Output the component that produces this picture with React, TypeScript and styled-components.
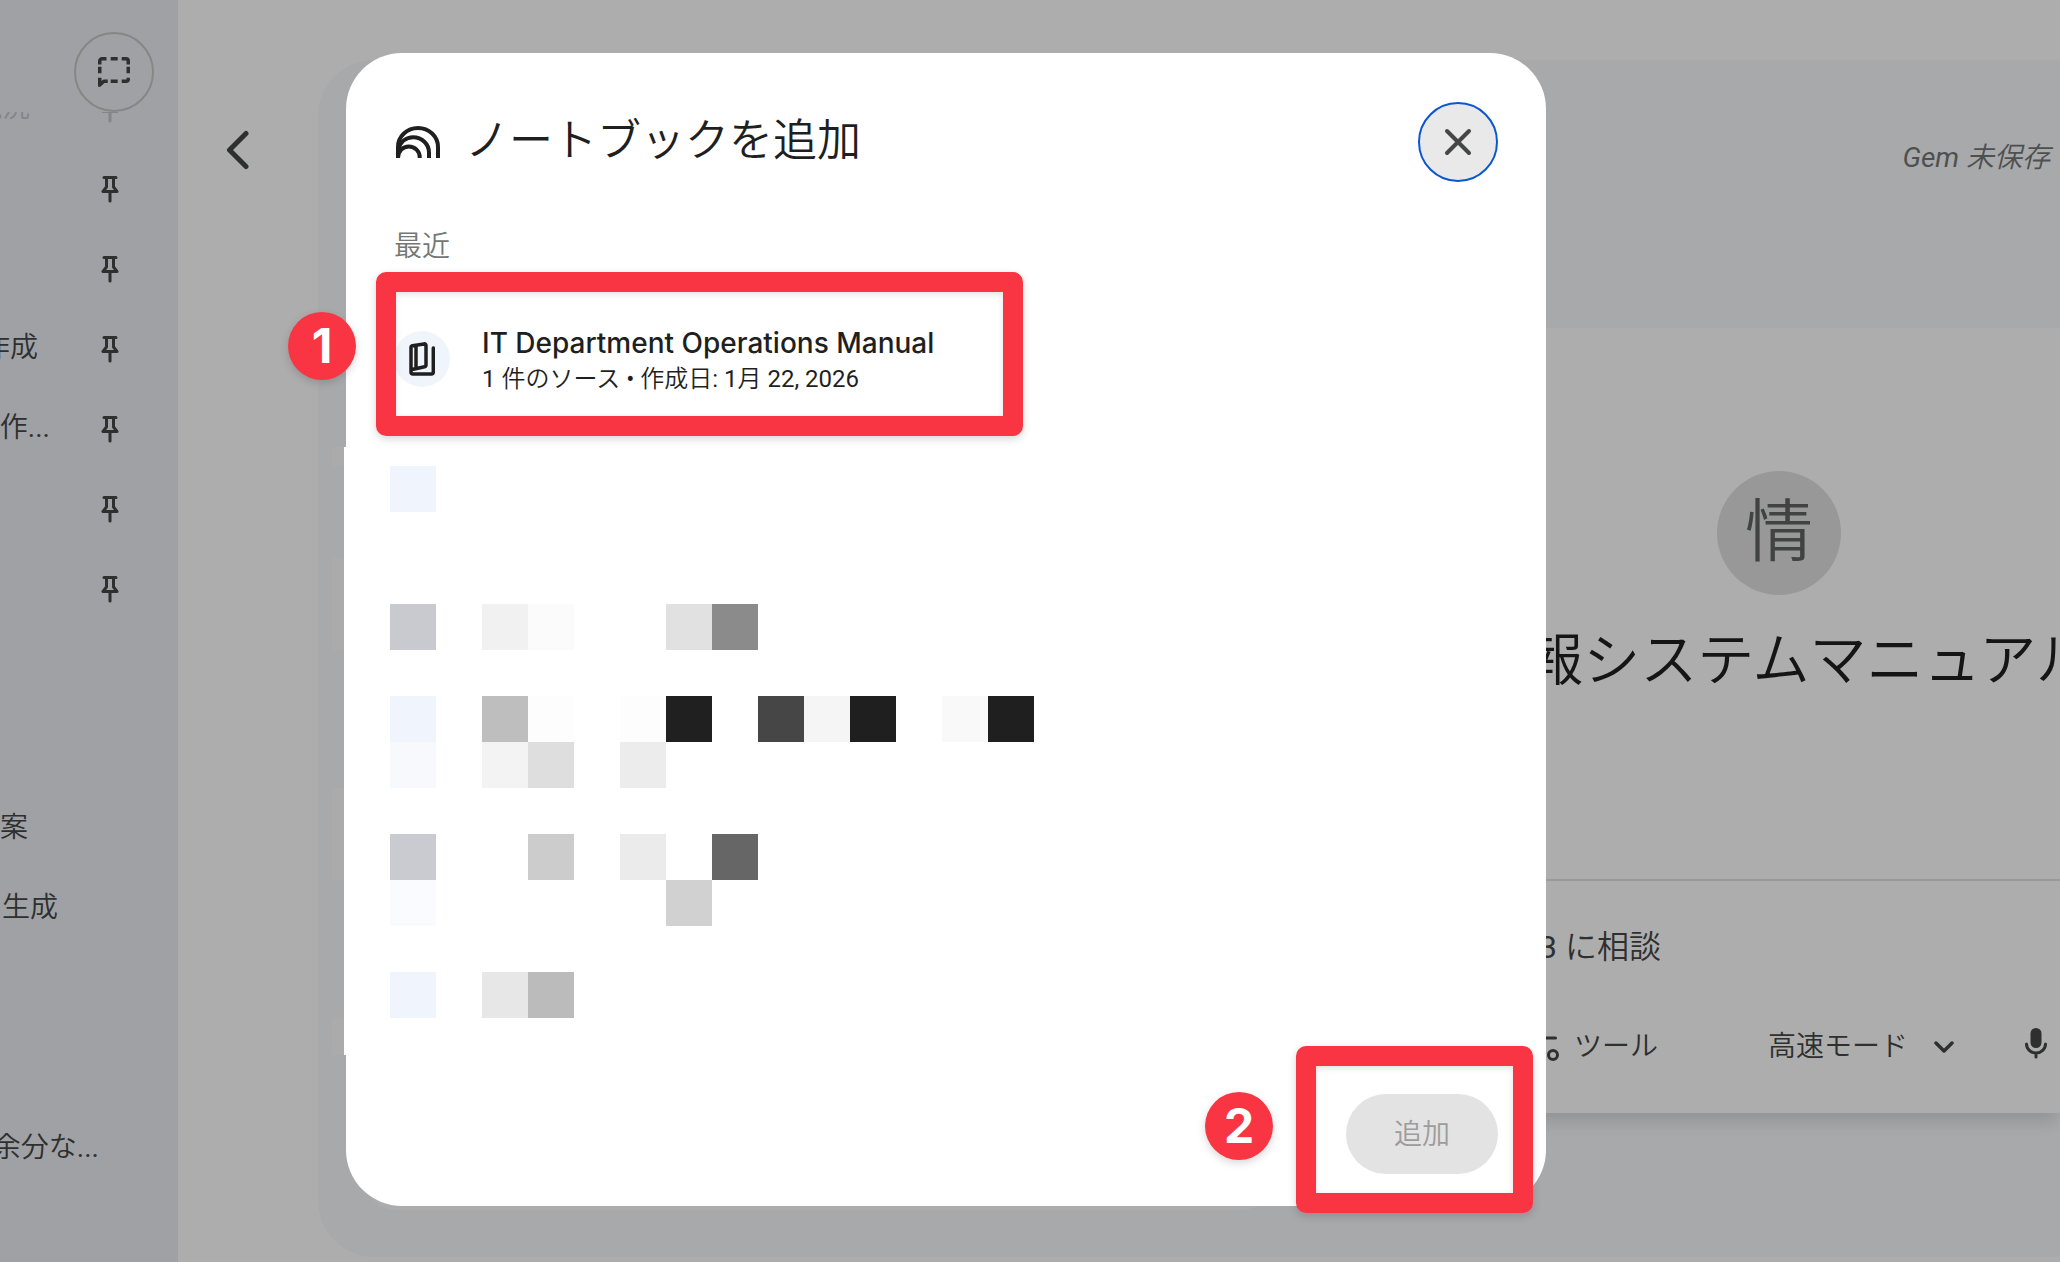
import React from "react";
import styled, { createGlobalStyle } from "styled-components";

const fontStack = `Roboto, "Noto Sans CJK JP DemiLight", "Noto Sans CJK JP", sans-serif`;

const colors = {
  sidebar: "#ebedf4",
  surface: "#ffffff",
  card: "#f8fafd",
  text: "#1f1f1f",
  icon: "#444746",
  outline: "#c4c7c5",
  callout: "#f93543",
};

const GlobalStyle = createGlobalStyle`
  *, *::before, *::after { box-sizing: border-box; }
  body { margin: 0; background: #adadad; }
  button { font: inherit; color: inherit; border: 0; padding: 0; background: none; cursor: pointer; }
  h1, h2, h3, p, ul { margin: 0; padding: 0; font-weight: inherit; }
  ul { list-style: none; }
  svg { display: block; flex: none; }
`;

const Page = styled.div`
  position: relative;
  display: flex;
  height: 100vh;
  overflow: hidden;
  background: ${colors.surface};
  color: ${colors.text};
  font-family: ${fontStack};
  font-size: 28px;
  font-weight: 400;
  line-height: 36px;
`;

/* Sidebar */

const Sidebar = styled.nav`
  flex: none;
  display: flex;
  flex-direction: column;
  width: 178px;
  background: ${colors.sidebar};
  color: ${colors.icon};
`;

const SidebarTop = styled.div`
  display: flex;
  justify-content: flex-end;
  padding: 32px 24px 0;
`;

const TempChatButton = styled.button`
  display: grid;
  place-items: center;
  width: 80px;
  height: 80px;
  border: 2px solid ${colors.outline};
  border-radius: 50%;
`;

const ChatScroll = styled.div`
  position: relative;
  flex: 1;
  display: flex;
  flex-direction: column;
  justify-content: flex-start;
  overflow: hidden;

  &::before {
    content: "";
    position: absolute;
    z-index: 1;
    inset: 0 0 auto;
    height: 24px;
    background: ${colors.sidebar};
    opacity: 0.75;
  }
`;

const ChatList = styled.ul`
  margin-top: -43px;
`;

const ChatRow = styled.li`
  display: flex;
  justify-content: space-between;
  align-items: center;
  height: 80px;
  padding-right: 59px;
`;

const ChatName = styled.span<{ $visible: number }>`
  display: flex;
  justify-content: flex-end;
  width: ${(p) => p.$visible}px;
  padding-bottom: 2px;
  overflow: hidden;
  white-space: nowrap;
`;

/* Gem editor */

const Main = styled.main`
  flex: 1;
  min-width: 0;
  display: flex;
  padding: 60px 0 5px;
`;

const BackColumn = styled.div`
  flex: none;
  width: 140px;
  padding: 60px 30px 0;
`;

const BackButton = styled.button`
  display: grid;
  place-items: center;
  width: 60px;
  height: 60px;
`;

const EditorCard = styled.section`
  flex: 1;
  min-width: 0;
  display: flex;
  flex-direction: column;
  border-radius: 56px 0 0 56px;
  background: ${colors.card};
`;

const EditorHeader = styled.header`
  flex: none;
  display: flex;
  justify-content: flex-end;
  height: 268px;
  padding: 80px 10px 0;
  color: #747775;
  font-style: italic;
`;

const EditorBody = styled.div`
  flex: 1;
  display: grid;
  grid-template-columns: minmax(0, 1fr) 562px;
  gap: 224px;
  padding-left: 47px;
`;

const FormPane = styled.div`
  margin-bottom: 47px;
  border-radius: 32px;
  background: ${colors.surface};
`;

const PreviewPane = styled.div`
  display: flex;
  flex-direction: column;
  margin-bottom: 144px;
  background: ${colors.surface};
`;

const PreviewHero = styled.div`
  flex: 1;
  display: flex;
  flex-direction: column;
  align-items: center;
  padding-top: 143px;
`;

const GemAvatar = styled.div`
  display: grid;
  place-items: center;
  width: 124px;
  height: 124px;
  border-radius: 50%;
  background: #e1e1e1;
  color: #5f6361;
  font-size: 68px;
  line-height: 80px;
`;

const GemTitle = styled.h2`
  padding: 26px 0 0 4px;
  font-size: 57px;
  line-height: 80px;
  white-space: nowrap;
`;

const Composer = styled.div`
  flex: none;
  display: flex;
  flex-direction: column;
  justify-content: space-between;
  height: 234px;
  border-top: 2px solid #e1e3e1;
  padding: 46px 12px 46px 32px;
  box-shadow: 0 12px 16px -2px rgba(0, 0, 0, 0.12);
  clip-path: inset(0 0 -48px 0);
`;

const Prompt = styled.p`
  display: flex;
  justify-content: flex-end;
  width: 131px;
  color: ${colors.icon};
  font-size: 32px;
  line-height: 40px;
  white-space: nowrap;
`;

const ComposerBar = styled.div`
  display: flex;
  justify-content: space-between;
  align-items: center;
  color: ${colors.icon};
`;

const ToolButton = styled.button<{ $gap: number }>`
  display: flex;
  align-items: center;
  gap: ${(p) => p.$gap}px;
`;

const ModeGroup = styled.div`
  display: flex;
  align-items: center;
  gap: 70px;
`;

const MicButton = styled.button`
  height: 40px;
  padding-bottom: 8px;
`;

/* Dialog */

const Scrim = styled.div`
  position: absolute;
  z-index: 2;
  inset: 0;
  display: flex;
  justify-content: center;
  align-items: center;
  padding: 0 168px 4px 0;
  background: rgba(0, 0, 0, 0.32);
`;

const Dialog = styled.section`
  width: 1200px;
  max-width: 100%;
  border-radius: 56px;
  padding: 49px 0 32px;
  background: ${colors.surface};
`;

const DialogHeader = styled.header`
  display: flex;
  align-items: center;
  gap: 25px;
  padding: 0 48px 0 50px;
`;

const DialogTitle = styled.h1`
  flex: 1;
  padding-bottom: 2px;
  font-size: 44px;
  line-height: 56px;
`;

const CloseButton = styled.button`
  display: grid;
  place-items: center;
  width: 80px;
  height: 80px;
  border: 2px solid #0b57d0;
  border-radius: 50%;
  background: #e9e9e9;
  color: ${colors.icon};
`;

const SectionLabel = styled.h3`
  padding: 47px 48px 27px;
  font-size: 28px;
  line-height: 36px;
  color: #747775;
`;

const Anchor = styled.div`
  position: relative;
`;

const NotebookRow = styled.button`
  display: flex;
  align-items: center;
  gap: 32px;
  width: 100%;
  height: 124px;
  padding: 10px 48px 0;
  text-align: left;
`;

const NotebookBadge = styled.span`
  display: grid;
  place-items: center;
  width: 56px;
  height: 56px;
  border-radius: 50%;
  background: #f0f4fb;
`;

const NotebookText = styled.span`
  display: flex;
  flex-direction: column;
`;

const NotebookName = styled.span`
  font-family: Inter, "Noto Sans CJK JP", sans-serif;
  font-weight: 500;
  font-size: 28px;
  line-height: 40px;
`;

const NotebookMeta = styled.span`
  font-size: 24px;
  line-height: 32px;
`;

const Redacted = styled.div`
  display: flex;
  margin: 31px 0 39px -14px;
`;

const RedactedEdge = styled.div`
  flex: none;
  width: 12px;
  background: linear-gradient(
    #ababab 0 19px, transparent 19px 111px,
    #ababab 111px 203px, transparent 203px 341px,
    #ababab 341px 433px, transparent 433px 571px,
    #ababab 571px
  );
`;

const Mosaic = styled.div`
  flex: 1;
  display: grid;
  grid-template-columns: repeat(14, 46px);
  grid-auto-rows: 46px;
  padding: 19px 0 37px 46px;
  background: ${colors.surface};
`;

const Tile = styled.i<{ $tone: string }>`
  background: ${(p) => p.$tone};
`;

const DialogFooter = styled.footer`
  display: flex;
  justify-content: flex-end;
  padding: 0 48px;
`;

const AddButton = styled.button`
  display: block;
  width: 152px;
  height: 80px;
  padding-top: 2px;
  border-radius: 40px;
  background: #e3e3e3;
  color: #9c9c9c;
  font-size: 28px;
  line-height: 36px;
`;

/* Callouts */

const Frame = styled.div<{ $inset: string }>`
  position: absolute;
  inset: ${(p) => p.$inset};
  border: 20px solid ${colors.callout};
  border-radius: 10px;
  box-shadow: 0 3px 8px rgba(0, 0, 0, 0.16), inset 0 2px 6px rgba(0, 0, 0, 0.12);
  pointer-events: none;
`;

const StepBadge = styled.div<{ $left: number; $top: number }>`
  position: absolute;
  left: ${(p) => p.$left}px;
  top: ${(p) => p.$top}px;
  display: grid;
  place-items: center;
  width: 68px;
  height: 68px;
  border-radius: 50%;
  background: ${colors.callout};
  box-shadow: 0 3px 8px rgba(0, 0, 0, 0.16);
  color: #fff;
  font-family: Inter, "Liberation Sans", sans-serif;
  font-weight: 700;
  font-size: 48px;
  line-height: 64px;
`;

/* Icons */

const PinIcon = () => (
  <svg width="18" height="28" viewBox="0 0 18 28" fill="none" stroke="currentColor" strokeWidth="3" strokeLinecap="round" strokeLinejoin="round">
    <path d="M3 2.500h12M5.500 2.500v9.500L2 16.500h14L12.500 12V2.500M9 17v9" />
  </svg>
);

const TempChatIcon = () => (
  <svg width="32" height="30" viewBox="0 0 32 30" fill="none" stroke="currentColor" strokeWidth="3.500">
    <path d="M1.750 7.500V4a2.250 2.250 0 0 1 2.250-2.250h4.500M12.700 1.750h7M23.700 1.750H28A2.250 2.250 0 0 1 30.250 4v3.500M1.750 9.800v6.500M30.250 9.800v6.500M30.250 20.700V22a2.250 2.250 0 0 1-2.250 2.250h-4.300M12.700 24.250h7M1.750 20.700v7.300l4-3.750h4" strokeLinejoin="round" />
    <path d="M0 24v4.800c0 1 1.200 1.500 2 .8l4.500-4.500z" fill="currentColor" stroke="none" />
  </svg>
);

const BackIcon = () => (
  <svg width="24" height="40" viewBox="0 0 24 40" fill="none" stroke={colors.icon} strokeWidth="5" strokeLinecap="round" strokeLinejoin="round">
    <path d="M20 3.500 3.500 20 20 36.500" />
  </svg>
);

const LogoIcon = () => (
  <svg width="44" height="32" viewBox="0 0 44 32" fill="none" stroke="currentColor" strokeWidth="4">
    <path d="M2 32V21A20 19 0 0 1 42 21V32" />
    <path d="M2 23.500C4.500 15.500 10.500 11.300 17 11.300C26 11.300 33 18 33 26.500V32" />
    <path d="M2 32C2 25 7 20.500 12.800 20.500C19 20.500 23.700 25.300 23.700 31V32" />
  </svg>
);

const CloseIcon = () => (
  <svg width="28" height="28" viewBox="0 0 28 28" fill="none" stroke="currentColor" strokeWidth="4" strokeLinecap="round">
    <path d="M3 3l22 22M25 3 3 25" />
  </svg>
);

const NotebookIcon = () => (
  <svg width="26" height="34" viewBox="0 0 26 34" fill="none" stroke="currentColor" strokeWidth="3.500" strokeLinecap="round" strokeLinejoin="round">
    <path d="M2 30.500V5.500C2 4.500 2.600 4 3.400 3.800L15 1.900C16.200 1.700 17 2.300 17 3.400V23C17 24 16.500 24.500 15.600 24.700L2 27.800M7 4V26M2 28V30C2 31.300 2.700 32 4 32H22.300C23.600 32 24.300 31.300 24.300 30V6" />
  </svg>
);

const ToolsIcon = () => (
  <svg width="30" height="28" viewBox="0 0 30 28" fill="none" stroke="currentColor" strokeWidth="3" strokeLinecap="round">
    <circle cx="6" cy="5" r="4.500" />
    <path d="M14 5h11.500M3 22h10" />
    <circle cx="23" cy="22" r="4.500" />
  </svg>
);

const ChevronDownIcon = () => (
  <svg width="20" height="12" viewBox="0 0 20 12" fill="none" stroke="currentColor" strokeWidth="3.500" strokeLinecap="round" strokeLinejoin="round">
    <path d="M2 2l8 8 8-8" />
  </svg>
);

const MicIcon = () => (
  <svg width="24" height="32" viewBox="0 0 24 32" fill="none" stroke="currentColor" strokeLinecap="round">
    <rect x="6.500" y="1" width="11" height="20" rx="5.500" fill="currentColor" stroke="none" />
    <path d="M2.500 17a9.500 9 0 0 0 19 0M12 26v4" strokeWidth="3" />
  </svg>
);

/* Data */

type Chat = { name?: string; visible?: number; pinned?: boolean };

const chats: Chat[] = [
  { name: "現況", visible: 30, pinned: true },
  { pinned: true },
  { pinned: true },
  { name: "作成", visible: 38, pinned: true },
  { name: "作...", visible: 50, pinned: true },
  { pinned: true },
  { pinned: true },
  {},
  {},
  { name: "案", visible: 28 },
  { name: "生成", visible: 58 },
  {},
  {},
  { name: "余分な...", visible: 99 },
];

const mosaicRows: Record<number, Record<number, string>> = {
  0: { 0: "#f0f4fc" },
  3: { 0: "#c9cad0", 2: "#f1f1f1", 3: "#fbfbfb", 6: "#e1e1e1", 7: "#8b8b8b" },
  5: {
    0: "#f0f4fc", 2: "#bebebe", 3: "#fdfdfd", 5: "#fdfdfd", 6: "#202020",
    8: "#464646", 9: "#f5f5f5", 10: "#1f1f1f", 12: "#f9f9f9", 13: "#1f1f1f",
  },
  6: { 0: "#f7f9fd", 2: "#f3f3f3", 3: "#dedede", 5: "#ececec" },
  8: { 0: "#cacbd0", 3: "#cccccc", 5: "#ebebeb", 7: "#666666" },
  9: { 0: "#fafbfe", 6: "#d1d1d1" },
  11: { 0: "#f0f4fc", 2: "#e7e7e7", 3: "#bbbbbb" },
};

const tiles = Array.from({ length: 12 * 14 }, (_, i) => {
  const row = mosaicRows[Math.floor(i / 14)];
  return (row && row[i % 14]) || "transparent";
});

export default function App() {
  return (
    <>
      <GlobalStyle />
      <Page>
        <Sidebar>
          <SidebarTop>
            <TempChatButton aria-label="一時チャット">
              <TempChatIcon />
            </TempChatButton>
          </SidebarTop>
          <ChatScroll>
            <ChatList>
              {chats.map((chat, i) => (
                <ChatRow key={i}>
                  <ChatName $visible={chat.visible ?? 0}>{chat.name}</ChatName>
                  {chat.pinned && <PinIcon />}
                </ChatRow>
              ))}
            </ChatList>
          </ChatScroll>
        </Sidebar>

        <Main>
          <BackColumn>
            <BackButton aria-label="戻る">
              <BackIcon />
            </BackButton>
          </BackColumn>
          <EditorCard>
            <EditorHeader>Gem 未保存</EditorHeader>
            <EditorBody>
              <FormPane />
              <PreviewPane>
                <PreviewHero>
                  <GemAvatar>情</GemAvatar>
                  <GemTitle>情報システムマニュアル</GemTitle>
                </PreviewHero>
                <Composer>
                  <Prompt>3 に相談</Prompt>
                  <ComposerBar>
                    <ToolButton $gap={14}>
                      <ToolsIcon />
                      ツール
                    </ToolButton>
                    <ModeGroup>
                      <ToolButton $gap={26}>
                        高速モード
                        <ChevronDownIcon />
                      </ToolButton>
                      <MicButton aria-label="マイク">
                        <MicIcon />
                      </MicButton>
                    </ModeGroup>
                  </ComposerBar>
                </Composer>
              </PreviewPane>
            </EditorBody>
          </EditorCard>
        </Main>

        <Scrim>
          <Dialog role="dialog" aria-labelledby="dialog-title">
            <DialogHeader>
              <LogoIcon />
              <DialogTitle id="dialog-title">ノートブックを追加</DialogTitle>
              <CloseButton aria-label="閉じる">
                <CloseIcon />
              </CloseButton>
            </DialogHeader>

            <SectionLabel>最近</SectionLabel>
            <Anchor>
              <NotebookRow>
                <NotebookBadge>
                  <NotebookIcon />
                </NotebookBadge>
                <NotebookText>
                  <NotebookName>IT Department Operations Manual</NotebookName>
                  <NotebookMeta>1 件のソース • 作成日: 1月 22, 2026</NotebookMeta>
                </NotebookText>
              </NotebookRow>
              <Frame $inset="-20px 523px -20px 30px" />
              <StepBadge $left={-58} $top={20}>1</StepBadge>
            </Anchor>

            <Redacted aria-hidden="true">
              <RedactedEdge />
              <Mosaic>
                {tiles.map((tone, i) => (
                  <Tile key={i} $tone={tone} />
                ))}
              </Mosaic>
            </Redacted>

            <DialogFooter>
              <Anchor>
                <AddButton>追加</AddButton>
                <Frame $inset="-48px -35px -39px -50px" />
                <StepBadge $left={-141} $top={-2}>2</StepBadge>
              </Anchor>
            </DialogFooter>
          </Dialog>
        </Scrim>
      </Page>
    </>
  );
}
